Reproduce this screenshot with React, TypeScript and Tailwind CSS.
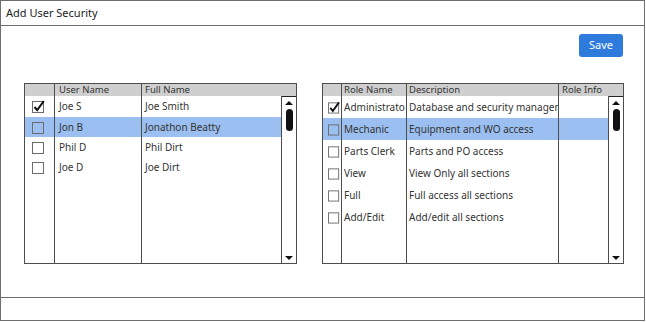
import React from 'react'

type Col = { key: string; label: string; width: string; pad: string }

const font = { fontFamily: '"Noto Sans", "Open Sans", sans-serif' }

function CheckBox({ checked, className }: { checked?: boolean; className?: string }) {
  return (
    <svg width="14" height="13" viewBox="0 0 14 13" className={className}>
      <rect x="0.5" y="1.5" width="11" height="11" fill="none" stroke="#6b6b6b" />
      {checked && <path d="M2.5 7 L5.2 10.2 L11.8 1" fill="none" stroke="#111" strokeWidth="2" />}
    </svg>
  )
}

function ScrollBar() {
  return (
    <div className="w-[14px] h-full flex flex-col items-center justify-between border-t border-[#222] pt-[4px] pb-[3px]">
      <div className="flex flex-col items-center gap-[4px]">
        <svg width="8" height="4" viewBox="0 0 8 4">
          <path d="M0 4 L4 0 L8 4 Z" fill="#111" />
        </svg>
        <div className="w-[7px] h-[22px] rounded-full bg-[#111]" />
      </div>
      <svg width="8" height="4" viewBox="0 0 8 4">
        <path d="M0 0 L8 0 L4 4 Z" fill="#111" />
      </svg>
    </div>
  )
}

type Row = { checked?: boolean; selected?: boolean; cells: string[]; h: string }

function Table({
  width,
  cols,
  rows,
  boxClass,
}: {
  width: string
  cols: Col[]
  rows: Row[]
  boxClass: string
}) {
  return (
    <div className={`${width} h-[181px] border border-[#4d4d4d] flex flex-col text-[10px] text-[#333]`}>
      <div className="h-[12px] bg-[#cfcfcf] flex text-[9.5px] leading-[12px] text-[#333]">
        <div className={`${cols[0].width} border-r border-[#4d4d4d] shrink-0`} />
        {cols.slice(1).map((c, i) => (
          <div
            key={c.key}
            className={`${i === cols.length - 2 ? 'flex-1' : `${c.width} border-r border-[#4d4d4d]`} ${c.pad} shrink-0 whitespace-nowrap overflow-hidden`}
          >
            {c.label}
          </div>
        ))}
      </div>
      <div className="flex-1 flex">
        {cols.map((c, ci) => (
          <div key={c.key} className={`${c.width} shrink-0 border-r border-[#4d4d4d] flex flex-col`}>
            {rows.map((r, ri) => (
              <div
                key={ri}
                className={`${r.h} flex items-center whitespace-nowrap overflow-hidden ${r.selected ? 'bg-[#9bbff0]' : ''} ${ci === 0 ? '' : c.pad}`}
              >
                {ci === 0 ? <CheckBox checked={r.checked} className={boxClass} /> : r.cells[ci - 1]}
              </div>
            ))}
          </div>
        ))}
        <ScrollBar />
      </div>
    </div>
  )
}

const userCols: Col[] = [
  { key: 'chk', label: '', width: 'w-[30px]', pad: '' },
  { key: 'user', label: 'User Name', width: 'w-[87px]', pad: 'pl-[4px]' },
  { key: 'full', label: 'Full Name', width: 'w-[140px]', pad: 'pl-[3px]' },
]

const users: Row[] = [
  { checked: true, cells: ['Joe S', 'Joe Smith'], h: 'h-[21px]' },
  { selected: true, cells: ['Jon B', 'Jonathon Beatty'], h: 'h-[20px]' },
  { cells: ['Phil D', 'Phil Dirt'], h: 'h-[20px]' },
  { cells: ['Joe D', 'Joe Dirt'], h: 'h-[20px]' },
]

const roleCols: Col[] = [
  { key: 'chk', label: '', width: 'w-[19px]', pad: '' },
  { key: 'role', label: 'Role Name', width: 'w-[65px]', pad: 'pl-[2px]' },
  { key: 'desc', label: 'Description', width: 'w-[152px]', pad: 'pl-[2px]' },
  { key: 'info', label: 'Role Info', width: 'w-[50px]', pad: 'pl-[3px]' },
]

const roles: Row[] = [
  { checked: true, cells: ['Administrato', 'Database and security manageme', ''], h: 'h-[22px]' },
  { selected: true, cells: ['Mechanic', 'Equipment and WO access', ''], h: 'h-[22px]' },
  { cells: ['Parts Clerk', 'Parts and PO access', ''], h: 'h-[22px]' },
  { cells: ['View', 'View Only all sections', ''], h: 'h-[22px]' },
  { cells: ['Full', 'Full access all sections', ''], h: 'h-[22px]' },
  { cells: ['Add/Edit', 'Add/edit all sections', ''], h: 'h-[22px]' },
]

export default function App() {
  return (
    <div className="w-[646px] h-[322px] bg-white" style={font}>
      <div className="w-[645px] h-[321px] border border-[#6d6d6d] flex flex-col">
        <div className="h-[25px] border-b border-[#6d6d6d] flex items-center pl-[5px] pt-[1px] text-[11px] text-[#222]">
          Add User Security
        </div>
        <div className="flex-1 flex flex-col">
          <div className="flex justify-end pt-[8px] pr-[21px]">
            <button className="w-[44px] h-[23px] rounded-[3px] bg-[#2f7bdb] text-white text-[11px]">Save</button>
          </div>
          <div className="flex gap-[25px] pl-[23px] pt-[26px]">
            <Table width="w-[273px]" cols={userCols} rows={users} boxClass="ml-[7px]" />
            <Table width="w-[302px]" cols={roleCols} rows={roles} boxClass="ml-[5px]" />
          </div>
        </div>
        <div className="h-[23px] border-t border-[#6d6d6d]" />
      </div>
    </div>
  )
}
